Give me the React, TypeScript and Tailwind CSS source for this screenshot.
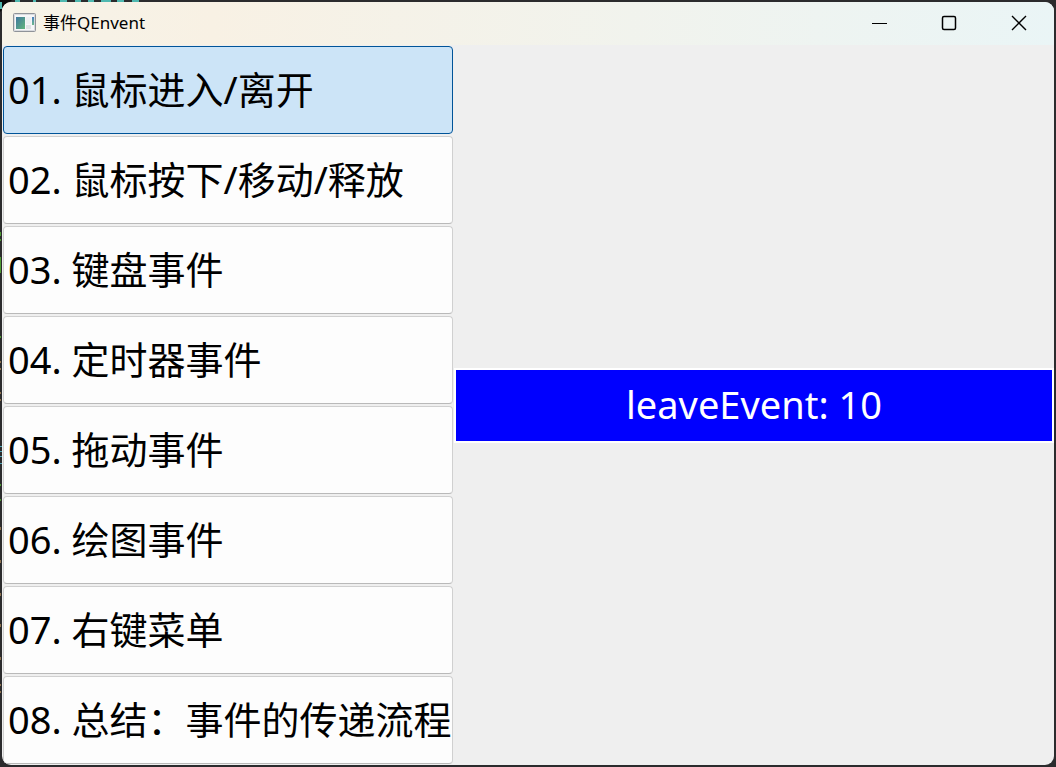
import React, { useState } from "react";

const items = [
  "01. 鼠标进入/离开",
  "02. 鼠标按下/移动/释放",
  "03. 键盘事件",
  "04. 定时器事件",
  "05. 拖动事件",
  "06. 绘图事件",
  "07. 右键菜单",
  "08. 总结：事件的传递流程",
];

/* Slivers of the code editor that show around the window's edge. */
function Backdrop() {
  return (
    <svg className="absolute top-0 left-0 h-full w-[160px]" aria-hidden="true">
      <path d="M0 0h12L0 12z" fill="#0a0a0a" />
      <path d="M0 2h2v7h-2zM15 0h5v2h-5zM33 0h3v2h-3zM60 0h7v2h-7zM75 0h6v2h-6zM88 0h6v2h-6zM101 0h10v2h-10zM117 0h7v2h-7zM132 0h7v2h-7z" fill="#4fb8b0" />
      <path d="M0 232h1v4h-1zM0 239h1v2h-1zM0 257h1v16h-1zM0 336h1v2h-1zM0 484h1v2h-1zM0 499h1v2h-1z" fill="#4c9a32" />
      <path d="M0 446h2v1h-2zM0 451h2v1h-2zM0 456h2v1h-2zM0 463h2v1h-2z" fill="#4fa3b5" />
      <path d="M0 361h1v2h-1zM0 368h1v2h-1zM0 392h1v2h-1zM0 399h1v2h-1zM0 527h1v3h-1zM0 560h1v3h-1zM0 593h1v3h-1zM0 624h1v3h-1zM0 657h1v3h-1zM0 684h1v2h-1zM0 691h1v2h-1z" fill="#8f7350" />
    </svg>
  );
}

function AppIcon() {
  return (
    <svg width="24" height="20" viewBox="0 0 24 20" aria-hidden="true">
      <defs>
        <linearGradient id="pane" x1="0" y1="0" x2="1" y2="1">
          <stop offset="0" stopColor="#3f78a0" />
          <stop offset="1" stopColor="#62b57c" />
        </linearGradient>
        <linearGradient id="strip" x1="0" y1="0" x2="0" y2="1">
          <stop offset="0" stopColor="#4a7fc0" />
          <stop offset="1" stopColor="#6cb98a" />
        </linearGradient>
      </defs>
      <rect x="0.5" y="0.5" width="22" height="18" rx="1" fill="#f6f6f8" stroke="#8f9399" />
      <rect x="1.5" y="1.5" width="20" height="16" fill="none" stroke="#d9dbdf" />
      <rect x="3" y="4" width="9" height="12" fill="url(#pane)" />
      <rect x="13" y="4" width="5" height="7" fill="#eef0f2" />
      <rect x="13" y="12" width="5" height="4" fill="#dfe2e5" />
      <rect x="19" y="4" width="2" height="8" fill="url(#strip)" />
    </svg>
  );
}

function TitleBar() {
  return (
    <header className="flex h-[43px] shrink-0 items-center justify-between bg-linear-to-r from-[#f6f3e8] via-[#f8f1e4] via-20% to-[#eaf5f6] pb-[2px] pl-[11px]">
      <div className="flex items-center gap-[6px]">
        <AppIcon />
        <h1 className="text-[17px] leading-6 text-black">事件QEnvent</h1>
      </div>
      <div className="flex h-full text-black">
        <button aria-label="Minimize" className="flex w-[70px] items-center justify-center">
          <svg width="16" height="16" viewBox="0 0 16 16">
            <path d="M1 8.5h15" stroke="currentColor" />
          </svg>
        </button>
        <button aria-label="Maximize" className="flex w-[70px] items-center justify-center">
          <svg width="16" height="16" viewBox="0 0 16 16">
            <rect x="1.5" y="1.5" width="13" height="13" rx="1.5" fill="none" stroke="currentColor" strokeWidth="1.5" />
          </svg>
        </button>
        <button aria-label="Close" className="flex w-[70px] items-center justify-center">
          <svg width="16" height="16" viewBox="0 0 16 16">
            <path d="M1 1l14 14M15 1L1 15" stroke="currentColor" strokeWidth="1.4" fill="none" />
          </svg>
        </button>
      </div>
    </header>
  );
}

export default function App() {
  const [active, setActive] = useState(0);
  return (
    <div className="relative h-screen bg-[#2b2b2d] p-[2px] font-['Noto_Sans','Noto_Sans_CJK_SC',sans-serif]">
      <Backdrop />
      <div className="relative flex h-full flex-col overflow-hidden rounded-[9px] bg-[#efefef]">
        <TitleBar />
        <main className="flex min-h-0 flex-1 gap-[1px] py-[1px] pl-[1px]">
          <nav className="flex w-[450px] shrink-0 flex-col gap-[2px]">
            {items.map((label, i) => (
              <button
                key={label}
                onClick={() => setActive(i)}
                className={
                  "flex min-h-0 flex-1 items-center rounded-[4px] border pb-[2px] pl-[4px] text-left text-[38px] leading-none whitespace-nowrap text-black " +
                  (i === active ? "border-[#005499] bg-[#cce4f7]" : "border-[#d0d0d0] border-b-[#b9b9b9] bg-[#fdfdfd]")
                }
              >
                {label}
              </button>
            ))}
          </nav>
          <section className="flex min-w-0 flex-1 items-center">
            <p className="w-full border-2 border-white bg-[#0000ff] pb-[2px] text-center text-[38px] leading-[69px] text-white">
              leaveEvent: 10
            </p>
          </section>
        </main>
      </div>
    </div>
  );
}
